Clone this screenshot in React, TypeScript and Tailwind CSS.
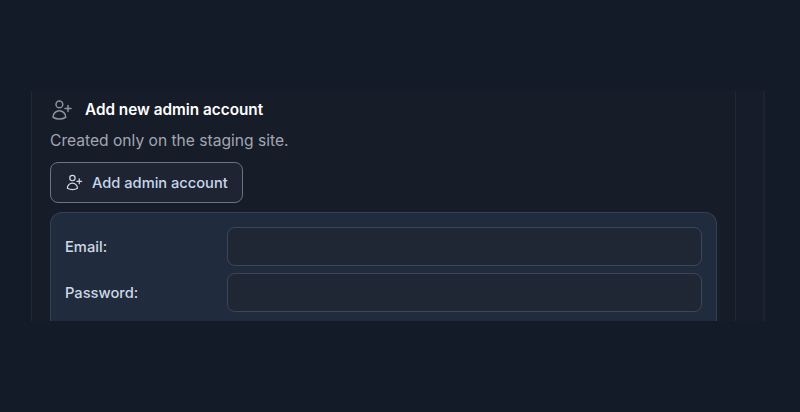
function UserPlus({ className }: { className: string }) {
  return (
    <svg viewBox="0 0 24 24" fill="none" stroke="currentColor" strokeWidth={1.5} strokeLinecap="round" strokeLinejoin="round" className={className}>
      <path d="M18 7.5v3m0 0v3m0-3h3m-3 0h-3m-2.25-4.125a3.375 3.375 0 1 1-6.75 0 3.375 3.375 0 0 1 6.75 0ZM3 19.235v-.11a6.375 6.375 0 0 1 12.75 0v.109A12.318 12.318 0 0 1 9.374 21c-2.331 0-4.512-.645-6.374-1.766Z" />
    </svg>
  );
}

function Field({ label }: { label: string }) {
  return (
    <div className="flex items-center">
      <label className="w-[162px] shrink-0 pt-[1px] text-[14.7px] font-medium text-[#d0d8e4]">{label}</label>
      <div className="h-[39px] flex-1 rounded-lg border border-[#3d4656] bg-[#1f2634]" />
    </div>
  );
}

export default function App() {
  return (
    <div className="h-[412px] w-[800px] overflow-hidden bg-[#131a28] py-[91px] pl-[31px] font-['Inter',sans-serif]">
      <div className="flex h-[230px] overflow-hidden">
        <div className="w-[705px] shrink-0 border-x border-[#222936] bg-[#171c29] pl-[18px] pr-[18px]">
          <div className="flex h-[37px] items-center">
            <UserPlus className="h-[24px] w-[24px] text-[#8b92a0]" />
            <h2 className="ml-[11px] pt-[2px] text-[15.3px] font-semibold text-white">Add new admin account</h2>
          </div>
          <p className="pt-[1px] text-[15.6px] leading-[24px] text-[#a1a7b2]">Created only on the staging site.</p>
          <button className="mt-[9px] flex h-[41px] w-[193px] items-center gap-[8px] rounded-lg border border-[#6b7280] bg-[#1e2431] pl-[14px] text-[14.65px] font-medium text-[#c7d7ee]">
            <UserPlus className="h-[19px] w-[19px] text-[#d5dbe5]" />
            <span className="pt-[2px]">Add admin account</span>
          </button>
          <div className="mt-[9px] flex h-[120px] flex-col gap-[7px] rounded-t-xl border border-b-0 border-[#334155] bg-[#202c3d] px-[14px] pt-[14px]">
            <Field label="Email:" />
            <Field label="Password:" />
          </div>
        </div>
        <div className="w-[29px] shrink-0 border-r-2 border-[#1d2431] bg-[#161c2a]" />
      </div>
    </div>
  );
}
